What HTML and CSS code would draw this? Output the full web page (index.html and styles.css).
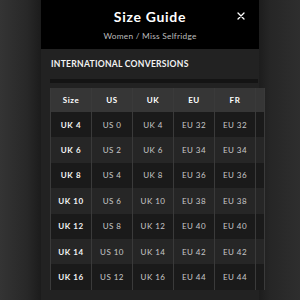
FILE: index.html
```html
<!DOCTYPE html>
<html>
<head>
<meta charset="utf-8">
<link rel="stylesheet" href="styles.css">
</head>
<body>
<div class="page">
  <div class="modal">
    <header class="head">
      <h1 class="title">Size Guide</h1>
      <p class="sub">Women / Miss Selfridge</p>
      <span class="close">
        <svg width="8" height="8" viewBox="0 0 8 8"><path d="M1 1L7 7M7 1L1 7" stroke="#fff" stroke-width="1.3" stroke-linecap="round"/></svg>
      </span>
    </header>
    <section class="body">
      <h2 class="sec">INTERNATIONAL CONVERSIONS</h2>
      <div class="bar"></div>
      <table class="grid">
        <thead>
          <tr><th>Size</th><th>US</th><th>UK</th><th>EU</th><th>FR</th><th class="x"></th></tr>
        </thead>
        <tbody>
          <tr><td class="k">UK 4</td><td>US 0</td><td>UK 4</td><td>EU 32</td><td>EU 32</td><td class="x"></td></tr>
          <tr><td class="k">UK 6</td><td>US 2</td><td>UK 6</td><td>EU 34</td><td>EU 34</td><td class="x"></td></tr>
          <tr><td class="k">UK 8</td><td>US 4</td><td>UK 8</td><td>EU 36</td><td>EU 36</td><td class="x"></td></tr>
          <tr><td class="k">UK 10</td><td>US 6</td><td>UK 10</td><td>EU 38</td><td>EU 38</td><td class="x"></td></tr>
          <tr><td class="k">UK 12</td><td>US 8</td><td>UK 12</td><td>EU 40</td><td>EU 40</td><td class="x"></td></tr>
          <tr><td class="k">UK 14</td><td>US 10</td><td>UK 14</td><td>EU 42</td><td>EU 42</td><td class="x"></td></tr>
          <tr><td class="k">UK 16</td><td>US 12</td><td>UK 16</td><td>EU 44</td><td>EU 44</td><td class="x"></td></tr>
        </tbody>
      </table>
    </section>
  </div>
</div>
</body>
</html>
```
FILE: styles.css
```css
html, body {
  margin: 0;
  padding: 0;
}
body {
  width: 300px;
  height: 300px;
  overflow: hidden;
  font-family: "Lato", "Open Sans", sans-serif;
  background: linear-gradient(90deg, #343434 0%, #282828 9%, #1c1c1c 13.5%, #1c1c1c 86%, #262626 90%, #2e2e2e 100%);
}
.page {
  display: flex;
  justify-content: center;
  height: 300px;
}
.modal {
  width: 218px;
  height: 300px;
  background: #222222;
  display: flex;
  flex-direction: column;
}
.head {
  position: relative;
  background: #000;
  height: 49px;
  display: flex;
  flex-direction: column;
  align-items: center;
  box-sizing: border-box;
  padding-top: 8px;
}
.title {
  margin: 0;
  color: #fff;
  font-size: 14px;
  font-weight: 700;
  letter-spacing: 0.7px;
  line-height: 18px;
}
.sub {
  margin: 0;
  margin-top: 1px;
  color: #bdbdbd;
  font-size: 8.3px;
  line-height: 18px;
  letter-spacing: 0.25px;
}
.close {
  position: absolute;
  right: 14px;
  top: 12px;
  width: 8px;
  height: 8px;
  display: flex;
}
.body {
  padding: 0 1px 0 9px;
}
.sec {
  margin: 0;
  color: #f2f2f2;
  font-size: 8.6px;
  font-weight: 700;
  letter-spacing: 0.25px;
  line-height: 12px;
  padding: 9px 0 0 1px;
  height: 21px;
}
.bar {
  height: 4px;
  background: #141414;
  margin-bottom: 5px;
}
.grid {
  border-collapse: collapse;
  table-layout: fixed;
  width: 208px;
}
.grid th, .grid td {
  width: 40px;
  padding: 0;
  text-align: center;
  border-left: 1px solid #3a3a3a;
  border-right: 1px solid #3a3a3a;
}
.grid th.x, .grid td.x {
  width: 8px;
}
.grid th {
  height: 24px;
  background: #363636;
  color: #fff;
  font-size: 8px;
  font-weight: 700;
  letter-spacing: 0.6px;
}
.grid td {
  height: 25.4px;
  color: #c8c8c8;
  font-size: 8px;
  letter-spacing: 0.45px;
}
.grid tbody tr:nth-child(odd) td {
  background: #1a1a1a;
}
.grid tbody tr:nth-child(even) td {
  background: #262626;
}
.grid td.k {
  color: #f4f4f4;
  font-weight: 700;
  letter-spacing: 0.6px;
}
```
